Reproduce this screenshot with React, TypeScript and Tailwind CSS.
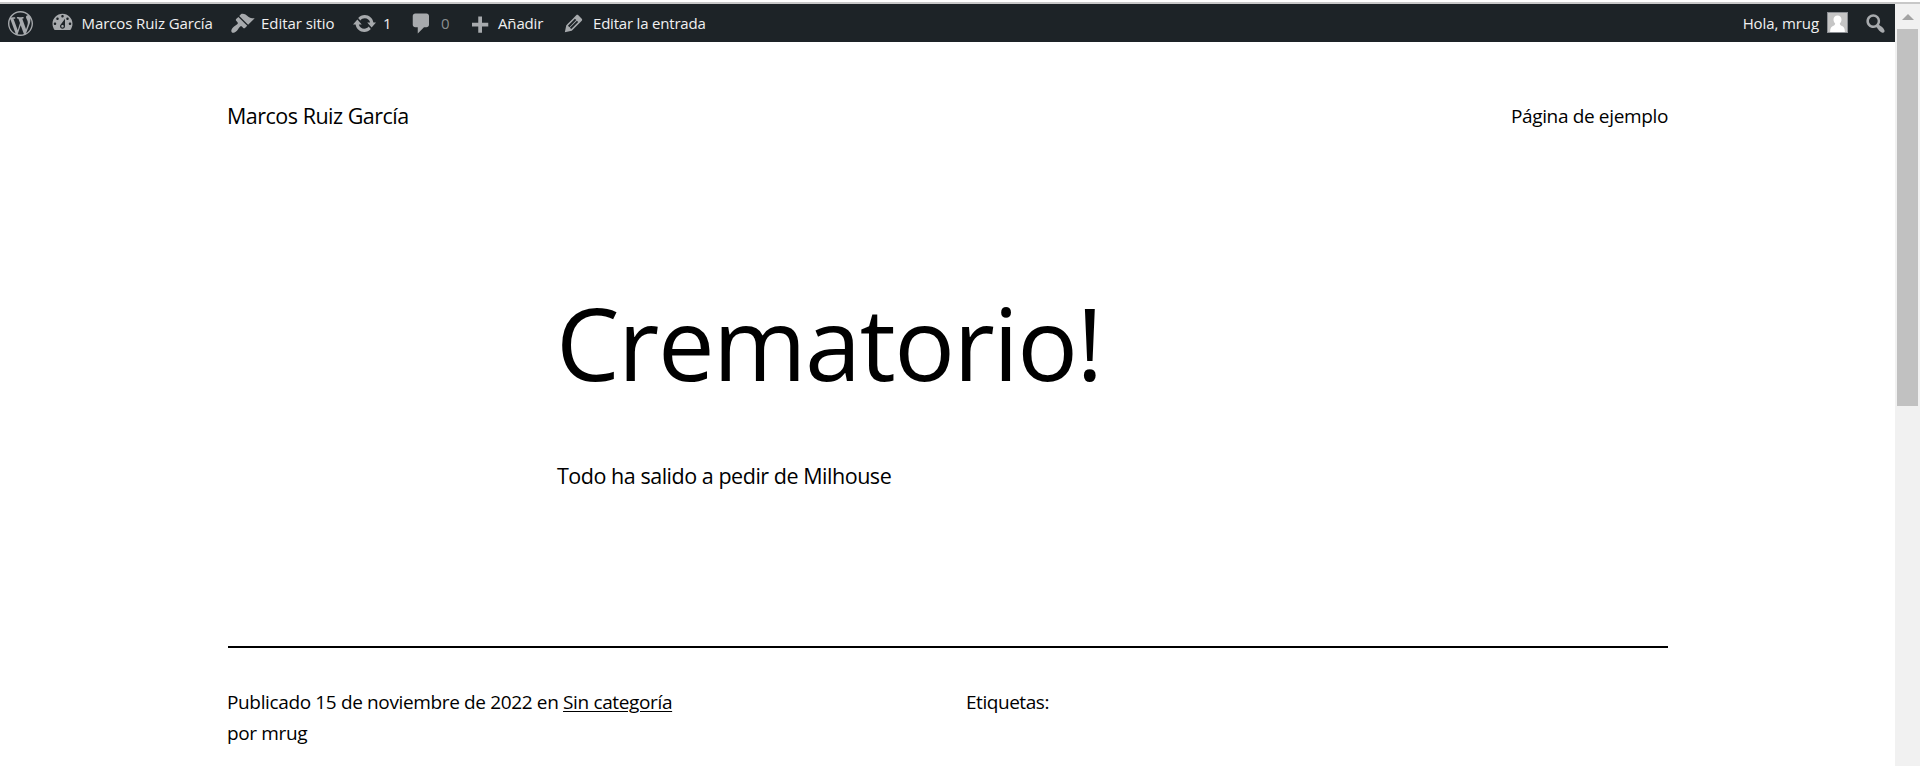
import type { ReactNode } from "react";

const ICONS = {
  wordpress:
    "M20 10c0-5.51-4.49-10-10-10C4.48 0 0 4.49 0 10c0 5.52 4.48 10 10 10 5.51 0 10-4.48 10-10zM7.78 15.37L4.37 6.22c.55-.02 1.17-.08 1.17-.08.5-.06.44-1.13-.06-1.11 0 0-1.45.11-2.37.11-.18 0-.37 0-.58-.01C4.12 2.69 6.87 1.11 10 1.11c2.33 0 4.45.87 6.05 2.34-.68-.11-1.65.39-1.65 1.58 0 .74.45 1.36.9 2.1.35.61.55 1.36.55 2.46 0 1.49-1.4 5-1.4 5l-3.03-8.37c.54-.02.82-.17.82-.17.5-.05.44-1.25-.06-1.22 0 0-1.44.12-2.38.12-.87 0-2.33-.12-2.33-.12-.5-.03-.56 1.2-.06 1.22l.92.08 1.26 3.41zM17.41 10c.24-.64.74-1.87.43-4.25.7 1.29 1.05 2.71 1.05 4.25 0 3.29-1.73 6.24-4.4 7.78.97-2.59 1.94-5.2 2.92-7.78zM6.1 18.09C3.12 16.65 1.11 13.53 1.11 10c0-1.3.23-2.48.72-3.59C3.25 10.3 4.67 14.2 6.1 18.09zm4.03-6.63l2.58 6.98c-.86.29-1.76.45-2.71.45-.79 0-1.57-.11-2.29-.33.81-2.38 1.62-4.74 2.42-7.1z",
  dashboard:
    "M3.76 16h12.48c1.1-1.37 1.76-3.11 1.76-5 0-4.42-3.58-8-8-8s-8 3.58-8 8c0 1.89.66 3.63 1.76 5zM10 4c.55 0 1 .45 1 1s-.45 1-1 1-1-.45-1-1 .45-1 1-1zM6 6c.55 0 1 .45 1 1s-.45 1-1 1-1-.45-1-1 .45-1 1-1zm8 0c.55 0 1 .45 1 1s-.45 1-1 1-1-.45-1-1 .45-1 1-1zm-5.37 5.55L12 7v6c0 1.1-.9 2-2 2s-2-.9-2-2c0-.57.24-1.08.63-1.45zM4 10c.55 0 1 .45 1 1s-.45 1-1 1-1-.45-1-1 .45-1 1-1zm12 0c.55 0 1 .45 1 1s-.45 1-1 1-1-.45-1-1 .45-1 1-1zm-5 3c0-.55-.45-1-1-1s-1 .45-1 1 .45 1 1 1 1-.45 1-1z",
  brush:
    "M14.48 11.06L7.41 3.99l1.5-1.5c.5-.56 2.3-.47 3.51.32 1.21.8 1.43 1.28 2.91 2.1 1.18.64 2.45 1.26 4.45.85zm-.71.71L6.7 4.7 4.93 6.47c-.39.39-.39 1.02 0 1.41l1.06 1.06c.39.39.39 1.03 0 1.42-.6.6-1.43 1.11-2.21 1.69-.35.26-.7.53-1.01.84C1.43 14.23.4 16.08 1.4 17.07c.99 1 2.84-.03 4.18-1.36.31-.31.58-.66.85-1.02.57-.78 1.08-1.61 1.69-2.21.39-.39 1.02-.39 1.41 0l1.06 1.06c.39.39 1.02.39 1.41 0z",
  update:
    "M10.2 3.28c3.53 0 6.43 2.61 6.92 6h2.08l-3.5 4-3.5-4h2.32c-.45-1.97-2.21-3.45-4.32-3.45-1.45 0-2.73.71-3.54 1.78L4.95 5.66C6.23 4.2 8.11 3.28 10.2 3.28zm-.4 13.44c-3.52 0-6.43-2.61-6.92-6H.8l3.5-4c1.17 1.33 2.33 2.67 3.5 4H5.48c.45 1.97 2.21 3.45 4.32 3.45 1.45 0 2.73-.71 3.54-1.78l1.71 1.95c-1.28 1.46-3.15 2.38-5.25 2.38z",
  comment:
    "M5 2h9c1.1 0 2 .9 2 2v7c0 1.1-.9 2-2 2h-2l-5 5v-5H5c-1.1 0-2-.9-2-2V4c0-1.1.9-2 2-2z",
  plus: "M17 7v3h-5v5H9v-5H4V7h5V2h3v5h5z",
  edit: "M13.89 3.39l2.71 2.72c.46.46.42 1.24.03 1.64l-8.01 8.02-5.56 1.16 1.16-5.58s7.6-7.63 7.99-8.03c.39-.39 1.22-.39 1.68.07zm-2.73 2.79l-5.59 5.61 1.11 1.11 5.54-5.65zm-2.97 8.23l5.58-5.6-1.07-1.08-5.59 5.6z",
  search:
    "M12.14 4.18c1.87 1.87 2.11 4.75.72 6.89.12.1.22.21.36.31.2.16.47.36.81.59.34.24.56.39.66.47.42.31.73.57.94.78.32.32.6.65.84 1 .25.35.44.69.59 1.04.14.35.21.68.18 1-.02.32-.14.59-.36.81s-.49.34-.81.36c-.31.02-.65-.04-.99-.19-.35-.14-.7-.34-1.04-.59-.35-.24-.68-.52-1-.84-.21-.21-.47-.52-.77-.93-.1-.13-.25-.35-.47-.66-.22-.32-.4-.57-.56-.78-.16-.2-.29-.35-.44-.5-2.07 1.09-4.69.76-6.44-.98-2.14-2.15-2.14-5.64 0-7.78 2.15-2.15 5.63-2.15 7.78 0zm-1.41 6.36c1.36-1.37 1.36-3.58 0-4.95-1.37-1.37-3.59-1.37-4.95 0-1.37 1.37-1.37 3.58 0 4.95 1.36 1.37 3.58 1.37 4.95 0z",
};

function Icon({ name, className = "" }: { name: keyof typeof ICONS; className?: string }) {
  return (
    <svg viewBox="0 0 20 20" className={`size-[25px] shrink-0 fill-[#a7aaad] ${className}`}>
      <path d={ICONS[name]} fillRule="evenodd" />
    </svg>
  );
}

function BarItem({ className, children }: { className: string; children: ReactNode }) {
  return <a className={`flex h-full shrink-0 items-center whitespace-nowrap ${className}`}>{children}</a>;
}

function AdminBar() {
  return (
    <nav className="flex h-[38px] items-center bg-[#1d2327] pl-2 text-[15px] leading-[38px] tracking-[-0.15px] text-[#f0f0f1]">
      <BarItem className="w-[42px]">
        <Icon name="wordpress" />
      </BarItem>
      <BarItem className="w-[180px] gap-[6.5px]">
        <Icon name="dashboard" className="mb-px" />
        <span className="tracking-[-0.1px]">Marcos Ruiz García</span>
      </BarItem>
      <BarItem className="w-[122px] gap-[6px]">
        <Icon name="brush" />
        <span className="tracking-[-0.05px]">Editar sitio</span>
      </BarItem>
      <BarItem className="w-[57px] gap-[6px]">
        <Icon name="update" className="mt-px" />
        <span>1</span>
      </BarItem>
      <BarItem className="w-[58px] gap-[7px]">
        <Icon name="comment" className="mt-px" />
        <span className="text-[#a7aaad]/80">0</span>
      </BarItem>
      <BarItem className="w-[94px] gap-[6px]">
        <Icon name="plus" className="mt-[6px]" />
        <span>Añadir</span>
      </BarItem>
      <BarItem className="gap-[7px]">
        <Icon name="edit" />
        <span className="tracking-[-0.2px]">Editar la entrada</span>
      </BarItem>
      <div className="flex-1" />
      <BarItem className="mr-[15px] gap-2">
        <span className="tracking-[-0.1px]">Hola, mrug</span>
        <svg viewBox="0 0 21 21" className="mb-px size-[21px]">
          <rect width="21" height="21" fill="#8c8f94" />
          <rect x="1" y="1" width="19" height="19" fill="#c5c5c5" />
          <path
            d="M10.5 3.5c2.5 0 4 1.8 4 4.1 0 1.7-.7 3.1-1.7 4 .2 1.5 1.2 2.1 2.7 2.7 1.6.7 2.3 2.4 2.4 5.7H3.1c.1-3.3.8-5 2.4-5.7 1.5-.6 2.5-1.2 2.7-2.7-1-.9-1.7-2.3-1.7-4 0-2.3 1.5-4.1 4-4.1z"
            fill="#fff"
          />
        </svg>
      </BarItem>
      <BarItem className="mr-[7px]">
        <Icon name="search" />
      </BarItem>
    </nav>
  );
}

function Scrollbar() {
  return (
    <div className="flex w-[25px] shrink-0 flex-col items-center bg-[#f1f1f1]">
      <div className="flex h-[25px] items-center justify-center">
        <svg viewBox="0 0 12 6" className="h-[6px] w-[12px] fill-[#a3a3a3]">
          <path d="M6 0l6 6H0z" />
        </svg>
      </div>
      <div className="h-[377px] w-[21px] bg-[#c1c1c1]" />
    </div>
  );
}

export default function App() {
  return (
    <div className="flex h-[766px] flex-col overflow-hidden bg-white font-['Open_Sans',sans-serif] text-black">
      <div className="mt-[2px] h-[2px] shrink-0 bg-[#c8c8c8]" />
      <div className="flex min-h-0 flex-1">
        <div className="min-w-0 flex-1">
          <AdminBar />
          <div className="pr-[227px] pl-[228px]">
            <header className="flex h-[149px] items-center justify-between">
              <span className="-ml-px text-[21.5px] tracking-[-0.5px]">Marcos Ruiz García</span>
              <a className="text-[19px] tracking-[-0.35px]">Página de ejemplo</a>
            </header>
            <main className="pl-[329px]">
              <h1 className="mt-[81px] -ml-px text-[101px] leading-[140px] font-[370] tracking-[-1.5px]">
                Crematorio!
              </h1>
              <p className="mt-[44px] text-[21.5px] leading-[40px] tracking-[-0.47px]">
                Todo ha salido a pedir de Milhouse
              </p>
            </main>
            <footer className="mt-[150px] flex border-t-2 border-black pt-[39px] text-[19px] leading-[31px] tracking-[-0.36px]">
              <div className="-ml-px w-[739px]">
                <p>
                  Publicado 15 de noviembre de 2022 en{" "}
                  <a className="underline decoration-1 underline-offset-2">Sin categoría</a>
                </p>
                <p>por mrug</p>
              </div>
              <div className="tracking-[-0.45px]">Etiquetas:</div>
            </footer>
          </div>
        </div>
        <Scrollbar />
      </div>
    </div>
  );
}
